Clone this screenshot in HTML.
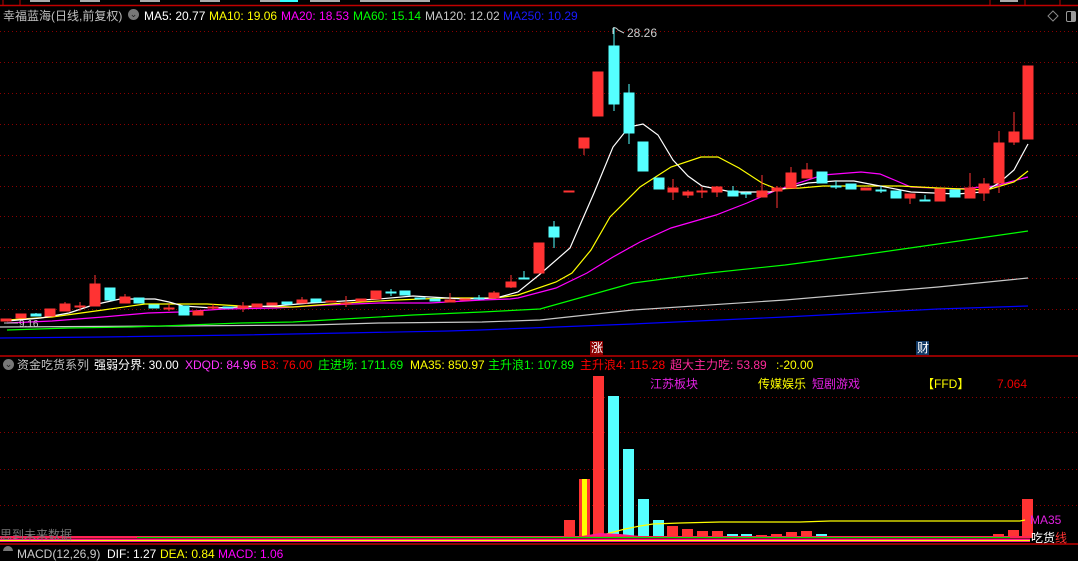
<!DOCTYPE html>
<html><head><meta charset="utf-8"><style>
html,body{margin:0;padding:0;background:#000;}
body{width:1078px;height:551px;position:relative;overflow:hidden;font-family:"Liberation Sans","Noto Sans CJK SC",sans-serif;font-size:12px;}
.t{position:absolute;white-space:nowrap;line-height:14px;}
</style></head><body>
<svg width="1078" height="551" style="position:absolute;left:0;top:0" xmlns="http://www.w3.org/2000/svg">
<line x1="0" y1="5.5" x2="1078" y2="5.5" stroke="#c00000" stroke-width="1.5"/>
<g stroke="#c00000" stroke-width="1"><line x1="3" y1="0" x2="3" y2="6"/><line x1="20" y1="0" x2="20" y2="6"/><line x1="990" y1="0" x2="990" y2="6"/><line x1="1025" y1="0" x2="1025" y2="6"/><line x1="1060" y1="0" x2="1060" y2="6"/></g>
<g fill="#aaa"><rect x="30" y="0" width="20" height="2"/><rect x="80" y="0" width="20" height="2"/><rect x="140" y="0" width="20" height="2"/><rect x="200" y="0" width="20" height="2"/><rect x="260" y="0" width="20" height="2"/><rect x="310" y="0" width="30" height="2"/><rect x="360" y="0" width="70" height="2"/><rect x="1000" y="0" width="18" height="2"/></g>
<rect x="280" y="0" width="18" height="2" fill="#3ff"/>
<path d="M1053 11 L1058 16 L1053 21 L1048 16 Z" fill="none" stroke="#888" stroke-width="1"/>
<rect x="1066.5" y="11.5" width="9" height="10" rx="1.5" fill="none" stroke="#999"/><rect x="1071" y="12" width="4" height="9" fill="#999"/>
<g stroke="#8a0000" stroke-width="1" stroke-dasharray="1,3">
<line x1="0" y1="31.5" x2="1078" y2="31.5"/><line x1="0" y1="62.5" x2="1078" y2="62.5"/><line x1="0" y1="93.5" x2="1078" y2="93.5"/><line x1="0" y1="124.5" x2="1078" y2="124.5"/><line x1="0" y1="155.5" x2="1078" y2="155.5"/><line x1="0" y1="186.5" x2="1078" y2="186.5"/><line x1="0" y1="216.5" x2="1078" y2="216.5"/><line x1="0" y1="247.5" x2="1078" y2="247.5"/><line x1="0" y1="278.5" x2="1078" y2="278.5"/><line x1="0" y1="309.5" x2="1078" y2="309.5"/>
<line x1="0" y1="397.5" x2="1078" y2="397.5"/><line x1="0" y1="432.5" x2="1078" y2="432.5"/><line x1="0" y1="469.5" x2="1078" y2="469.5"/><line x1="0" y1="505.5" x2="1078" y2="505.5"/>
</g>
<g fill="none" stroke-width="1.2">
<polyline stroke="#00f" points="0,338 103,337 241,335 344,333 448,331 480,330 633,324 785,317 938,309 1028,306"/>
<polyline stroke="#c8c8c8" points="0,327 172,326 310,325 379,323 482,322 540,320 633,310 785,300 938,287 1028,278"/>
<polyline stroke="#0f0" points="7,330 69,328 131,327 162,326 241,323 293,322 344,319 413,315 482,312 540,309 633,283 709,273 785,265 861,255 938,244 1028,231"/>
<polyline stroke="#f0f" points="7,323 52,321 103,317 148,313 179,312 224,309 275,308 327,305 379,303 430,303 482,300 510,299 518,298 556,288 587,273 613,257 640,242 671,228 716,215 747,203 777,190 823,175 861,172 880,174 911,187 957,189 995,186 1028,177"/>
<polyline stroke="#ff0" points="7,320 52,317 103,310 145,304 207,304 241,306 293,307 344,303 396,300 448,298 496,298 518,295 556,282 572,273 591,250 610,217 640,187 671,167 701,157 718,157 739,168 762,183 777,189 800,188 823,186 861,186 900,186 938,188 987,190 1014,182 1028,171"/>
<polyline stroke="#fff" points="7,321 41,318 69,313 93,305 120,299 155,299 169,302 183,306 213,308 241,307 275,306 310,303 344,301 379,299 413,296 465,299 496,298 518,292 539,275 570,248 594,193 613,147 629,127 643,124 658,135 673,160 688,176 702,186 732,192 770,192 808,183 835,181 854,181 880,186 911,192 957,194 983,192 999,183 1014,170 1028,144"/>
</g>
<g stroke-width="1">
<g fill="#ff3333" stroke="#ff3333">
<rect x="1" y="319" width="10" height="2"/><rect x="16" y="314" width="10" height="4"/><rect x="45" y="309" width="10" height="7"/>
<line x1="65" y1="302" x2="65" y2="304"/><rect x="60" y="304" width="10" height="7"/>
<line x1="80" y1="302" x2="80" y2="311"/><rect x="75" y="306" width="10" height="1"/>
<line x1="95" y1="275" x2="95" y2="284"/><rect x="90" y="284" width="10" height="22"/>
<line x1="125" y1="294" x2="125" y2="297"/><rect x="120" y="297" width="10" height="6"/>
<line x1="169" y1="304" x2="169" y2="311"/><rect x="164" y="308" width="10" height="1"/>
<rect x="193" y="311" width="10" height="4"/>
<line x1="213" y1="304" x2="213" y2="310"/><rect x="208" y="307" width="10" height="1"/>
<line x1="243" y1="302" x2="243" y2="312"/><rect x="238" y="306" width="10" height="2"/>
<rect x="252" y="304" width="10" height="3"/><rect x="267" y="303" width="10" height="2"/>
<line x1="302" y1="297" x2="302" y2="300"/><rect x="297" y="300" width="10" height="3"/>
<rect x="326" y="301" width="10" height="1"/>
<line x1="346" y1="296" x2="346" y2="307"/><rect x="341" y="303" width="10" height="1"/>
<rect x="356" y="299" width="10" height="2"/><rect x="371" y="291" width="10" height="8"/>
<line x1="450" y1="293" x2="450" y2="300"/><rect x="445" y="300" width="10" height="2"/>
<rect x="460" y="299" width="10" height="1"/>
<line x1="494" y1="291" x2="494" y2="293"/><rect x="489" y="293" width="10" height="5"/>
<line x1="511" y1="275" x2="511" y2="288"/><rect x="506" y="282" width="10" height="5"/>
<rect x="534" y="243" width="10" height="30"/>
<rect x="564" y="191" width="10" height="1"/>
<line x1="584" y1="148" x2="584" y2="155"/><rect x="579" y="138" width="10" height="10"/>
<rect x="593" y="72" width="10" height="44"/>
<line x1="673" y1="179" x2="673" y2="200"/><rect x="668" y="188" width="10" height="4"/>
<line x1="688" y1="190" x2="688" y2="198"/><rect x="683" y="192" width="10" height="3"/>
<line x1="702" y1="187" x2="702" y2="198"/><rect x="697" y="191" width="10" height="1"/>
<line x1="717" y1="186" x2="717" y2="197"/><rect x="712" y="187" width="10" height="5"/>
<line x1="762" y1="175" x2="762" y2="197"/><rect x="757" y="191" width="10" height="6"/>
<line x1="777" y1="186" x2="777" y2="208"/><rect x="772" y="188" width="10" height="3"/>
<line x1="791" y1="167" x2="791" y2="173"/><rect x="786" y="173" width="10" height="15"/>
<line x1="807" y1="163" x2="807" y2="170"/><rect x="802" y="170" width="10" height="8"/>
<rect x="861" y="188" width="10" height="2"/>
<line x1="910" y1="198" x2="910" y2="204"/><rect x="905" y="194" width="10" height="4"/>
<rect x="935" y="189" width="10" height="12"/>
<line x1="970" y1="173" x2="970" y2="188"/><rect x="965" y="188" width="10" height="10"/>
<line x1="984" y1="178" x2="984" y2="201"/><rect x="979" y="184" width="10" height="9"/>
<line x1="999" y1="131" x2="999" y2="193"/><rect x="994" y="143" width="10" height="40"/>
<line x1="1014" y1="112" x2="1014" y2="145"/><rect x="1009" y="132" width="10" height="10"/>
<rect x="1023" y="66" width="10" height="73"/>
</g>
<g fill="#55ffff" stroke="#55ffff">
<line x1="36" y1="313" x2="36" y2="316"/><rect x="31" y="314" width="10" height="2"/>
<rect x="105" y="288" width="10" height="12"/><rect x="134" y="298" width="10" height="5"/><rect x="149" y="305" width="10" height="3"/>
<rect x="179" y="306" width="10" height="9"/><rect x="223" y="307" width="10" height="1"/><rect x="282" y="302" width="10" height="2"/>
<rect x="311" y="299" width="10" height="3"/>
<line x1="391" y1="289" x2="391" y2="296"/><rect x="386" y="292" width="10" height="1"/>
<rect x="400" y="291" width="10" height="4"/><rect x="415" y="298" width="10" height="1"/><rect x="430" y="299" width="10" height="2"/>
<line x1="479" y1="295" x2="479" y2="300"/><rect x="474" y="298" width="10" height="1"/>
<line x1="524" y1="271" x2="524" y2="278"/><rect x="519" y="278" width="10" height="1"/>
<line x1="554" y1="221" x2="554" y2="248"/><rect x="549" y="227" width="10" height="10"/>
<line x1="614" y1="27" x2="614" y2="111"/><rect x="609" y="46" width="10" height="58"/>
<line x1="629" y1="84" x2="629" y2="144"/><rect x="624" y="93" width="10" height="40"/>
<rect x="638" y="142" width="10" height="29"/><rect x="654" y="178" width="10" height="11"/>
<line x1="733" y1="186" x2="733" y2="191"/><rect x="728" y="191" width="10" height="5"/>
<line x1="746" y1="192" x2="746" y2="198"/><rect x="741" y="193" width="10" height="1"/>
<rect x="817" y="172" width="10" height="11"/>
<line x1="836" y1="181" x2="836" y2="189"/><rect x="831" y="186" width="10" height="1"/>
<rect x="846" y="184" width="10" height="5"/>
<line x1="881" y1="186" x2="881" y2="193"/><rect x="876" y="190" width="10" height="1"/>
<rect x="891" y="191" width="10" height="7"/>
<line x1="925" y1="195" x2="925" y2="200"/><rect x="920" y="200" width="10" height="1"/>
<rect x="950" y="190" width="10" height="7"/>
</g>
</g>
<path d="M613 28 L613 34 M613 28 Q616 27 618 30 L624 33" stroke="#ccc" fill="none"/>
<text x="627" y="37" fill="#ccc" font-size="12" font-family="Liberation Sans">28.26</text>
<line x1="4" y1="323" x2="18" y2="323" stroke="#ccc"/>
<text x="19" y="327" fill="#ccc" font-size="10" font-family="Liberation Sans">9.16</text>
<rect x="590" y="341" width="13" height="14" fill="#8b0000"/>
<rect x="916" y="341" width="13" height="14" fill="#123a66"/>
<line x1="0" y1="356" x2="1078" y2="356" stroke="#c00000" stroke-width="1.5"/>
<g fill="#ff3333">
<rect x="564" y="520" width="11" height="18"/><rect x="579" y="479" width="11" height="59"/><rect x="593" y="376" width="11" height="162"/>
<rect x="667" y="526" width="11" height="12"/><rect x="682" y="529" width="11" height="9"/><rect x="697" y="531" width="11" height="7"/><rect x="712" y="531" width="11" height="7"/>
<rect x="756" y="535" width="11" height="3"/><rect x="771" y="534" width="11" height="4"/><rect x="786" y="532" width="11" height="6"/><rect x="801" y="531" width="11" height="7"/>
<rect x="993" y="534" width="11" height="4"/><rect x="1008" y="530" width="11" height="8"/><rect x="1022" y="499" width="11" height="39"/>
</g>
<rect x="582" y="479" width="5" height="59" fill="#ff0"/>
<g fill="#55ffff">
<rect x="608" y="396" width="11" height="142"/><rect x="623" y="449" width="11" height="89"/><rect x="638" y="499" width="11" height="39"/><rect x="653" y="520" width="11" height="18"/>
<rect x="727" y="534" width="11" height="4"/><rect x="741" y="534" width="11" height="4"/><rect x="816" y="534" width="11" height="4"/><rect x="830" y="536" width="11" height="2"/>
</g>
<polyline fill="none" stroke="#ff0" stroke-width="1.2" points="596,537 610,533 625,529 640,526 653,524 680,523 720,522 800,522 830,521 1020,521 1025,520"/>
<path d="M570 538 L600 533 L620 534 L640 536 L660 537 Z" fill="#ff1a8c"/>
<rect x="0" y="536" width="1030" height="2.5" fill="#ff2255"/>
<line x1="137" y1="537.5" x2="1010" y2="537.5" stroke="#00dd00" stroke-width="1"/>
<rect x="0" y="539" width="1030" height="3" fill="#ff1a8c"/>
<line x1="0" y1="540.5" x2="1030" y2="540.5" stroke="#ff0" stroke-width="1"/>
<line x1="0" y1="544" x2="1078" y2="544" stroke="#c00000" stroke-width="1.5"/>
<circle cx="8" cy="551" r="5" fill="#777"/>
</svg>

<div class="t" style="left:3px;top:9px;color:#c0c0c0">幸福蓝海(日线,前复权)</div>
<div class="t" style="left:128px;top:9px;width:11px;height:11px;border-radius:6px;background:#777;color:#222;font-size:9px;line-height:11px;text-align:center">⌄</div>
<div class="t" style="left:144px;top:9px;color:#fff">MA5: 20.77</div>
<div class="t" style="left:209px;top:9px;color:#ff0">MA10: 19.06</div>
<div class="t" style="left:281px;top:9px;color:#f0f">MA20: 18.53</div>
<div class="t" style="left:353px;top:9px;color:#0f0">MA60: 15.14</div>
<div class="t" style="left:425px;top:9px;color:#c8c8c8">MA120: 12.02</div>
<div class="t" style="left:503px;top:9px;color:#1a1aff">MA250: 10.29</div>

<div class="t" style="left:591px;top:341px;color:#fff">涨</div>
<div class="t" style="left:917px;top:341px;color:#fff">财</div>

<div class="t" style="left:3px;top:359px;width:11px;height:11px;border-radius:6px;background:#777;color:#222;font-size:9px;line-height:11px;text-align:center">⌄</div>
<div class="t" style="left:17px;top:358px;color:#c0c0c0">资金吃货系列</div>
<div class="t" style="left:94px;top:358px;color:#fff">强弱分界: 30.00</div>
<div class="t" style="left:185px;top:358px;color:#f3f">XDQD: 84.96</div>
<div class="t" style="left:261px;top:358px;color:#f00">B3: 76.00</div>
<div class="t" style="left:318px;top:358px;color:#0f0">庄进场: 1711.69</div>
<div class="t" style="left:410px;top:358px;color:#ff0">MA35: 850.97</div>
<div class="t" style="left:488px;top:358px;color:#0f0">主升浪1: 107.89</div>
<div class="t" style="left:580px;top:358px;color:#f00">主升浪4: 115.28</div>
<div class="t" style="left:670px;top:358px;color:#ff2a9a">超大主力吃: 53.89</div>
<div class="t" style="left:776px;top:358px;color:#ff0">:-20.00</div>

<div class="t" style="left:650px;top:377px;color:#e020e0">江苏板块</div>
<div class="t" style="left:758px;top:377px;color:#ff0">传媒娱乐</div>
<div class="t" style="left:812px;top:377px;color:#e020e0">短剧游戏</div>
<div class="t" style="left:922px;top:377px;color:#ff0">【FFD】</div>
<div class="t" style="left:997px;top:377px;color:#e00">7.064</div>

<div class="t" style="left:1030px;top:513px;color:#e020e0">MA35</div>
<div class="t" style="left:1031px;top:531px;color:#fff">吃货</div>
<div class="t" style="left:1055px;top:531px;color:#f33">线</div>
<div class="t" style="left:0px;top:528px;color:#777">思到未来数据</div>

<div class="t" style="left:17px;top:547px;color:#ccc">MACD(12,26,9)</div>
<div class="t" style="left:107px;top:547px;color:#fff">DIF: 1.27</div>
<div class="t" style="left:160px;top:547px;color:#ff0">DEA: 0.84</div>
<div class="t" style="left:218px;top:547px;color:#f0f">MACD: 1.06</div>
</body></html>
